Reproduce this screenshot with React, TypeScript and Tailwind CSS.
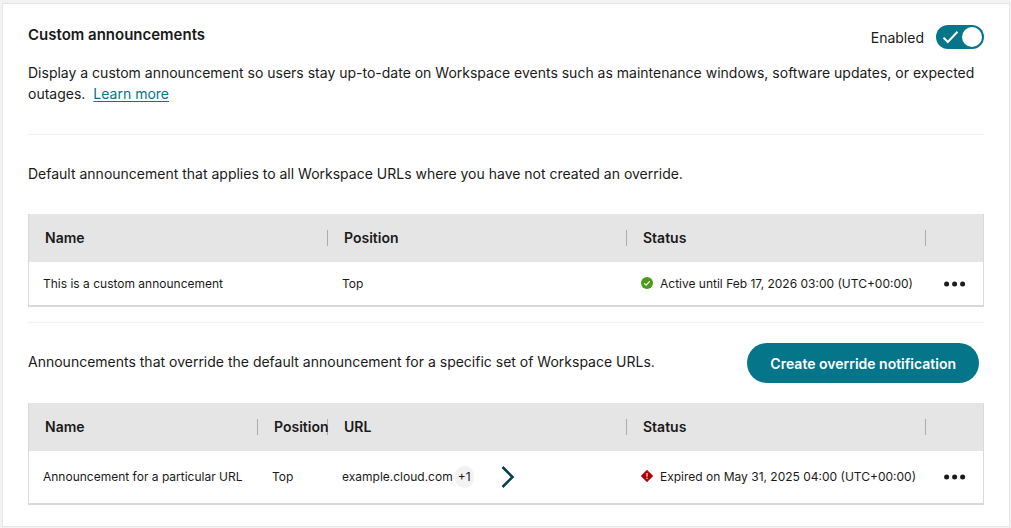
import { ReactNode } from "react"

function HeaderCell({ children, last }: { children?: ReactNode; last?: boolean }) {
    return (
        <th className="h-12 p-0 text-left leading-4 font-semibold">
            <div className={last ? "h-4" : "h-4 border-r border-[#adadad] pl-4 whitespace-nowrap"}>
                {children}
            </div>
        </th>
    )
}

function Cell({ children }: { children: ReactNode }) {
    return <td className="p-0 pl-[14px] text-xs leading-5 whitespace-nowrap">{children}</td>
}

function MoreButton() {
    return (
        <button type="button" aria-label="More actions" className="ml-[18px] block">
            <svg width="22" height="20" viewBox="0 0 22 20" fill="#1a1a1a">
                <circle cx="2.6" cy="10" r="2.5" />
                <circle cx="10.6" cy="10" r="2.5" />
                <circle cx="18.6" cy="10" r="2.5" />
            </svg>
        </button>
    )
}

function ActiveIcon() {
    return (
        <svg width="12" height="12" viewBox="0 0 12 12" className="mb-[2px] shrink-0">
            <circle cx="6" cy="6" r="6" fill="#4a9a17" />
            <path d="M3.2 6.3 5.1 8.2 8.9 4.1" fill="none" stroke="#fff" strokeWidth="1.2" />
        </svg>
    )
}

function ExpiredIcon() {
    return (
        <svg width="12" height="12" viewBox="0 0 12 12" className="mb-[2px] shrink-0">
            <path d="M6 0.7 11.3 6 6 11.3 0.7 6Z" fill="#ad0000" stroke="#ad0000" strokeWidth="1.2" strokeLinejoin="round" />
            <path d="M6 3v3.8M6 7.8v1.3" stroke="#f2c4c4" strokeWidth="1.4" />
        </svg>
    )
}

function Toggle() {
    return (
        <label className="flex items-center gap-3">
            Enabled
            <input type="checkbox" role="switch" defaultChecked className="sr-only" />
            <span className="flex h-6 w-12 items-center justify-between rounded-full bg-[#05758a] pr-[2px] pl-[6px]">
                <svg width="17" height="14" viewBox="0 0 17 14" fill="none" stroke="#fff" strokeWidth="2">
                    <path d="M1.5 7.6 5.8 12 15.5 1.7" />
                </svg>
                <span className="size-5 rounded-full bg-white" />
            </span>
        </label>
    )
}

function TableFrame({ children }: { children: ReactNode }) {
    return (
        <div className="border-x border-b-2 border-[#d9d9d9]">
            <table className="w-full table-fixed">{children}</table>
        </div>
    )
}

export default function App() {
    return (
        <div className="min-h-screen bg-[#f3f3f3] pt-[3px] pr-px pb-px pl-[2px] font-['Inter',sans-serif] text-sm leading-[21px] text-[#1a1a1a]">
            <main className="border border-[#e5e5e5] bg-white px-[25px] py-[21px]">
                <header className="flex h-6 items-start justify-between">
                    <h1 className="text-[15px] leading-5 font-semibold">Custom announcements</h1>
                    <Toggle />
                </header>
                <p className="mt-[13px]">
                    Display a custom announcement so users stay up-to-date on Workspace events such as maintenance windows,
                    software updates, or expected outages.
                    <a href="#" className="ml-2 text-[#05758a] underline underline-offset-2">Learn more</a>
                </p>

                <section className="mt-[30px] border-t border-[#f2f2f2] pt-7">
                    <p className="mb-[30px]">
                        Default announcement that applies to all Workspace URLs where you have not created an override.
                    </p>
                    <TableFrame>
                        <colgroup>
                            <col />
                            <col />
                            <col />
                            <col className="w-[57px]" />
                        </colgroup>
                        <thead className="bg-[#e5e5e5]">
                            <tr>
                                <HeaderCell>Name</HeaderCell>
                                <HeaderCell>Position</HeaderCell>
                                <HeaderCell>Status</HeaderCell>
                                <HeaderCell last />
                            </tr>
                        </thead>
                        <tbody>
                            <tr className="h-[43px]">
                                <Cell>This is a custom announcement</Cell>
                                <Cell>Top</Cell>
                                <Cell>
                                    <span className="flex items-center gap-[7px]">
                                        <ActiveIcon />
                                        Active until Feb 17, 2026 03:00 (UTC+00:00)
                                    </span>
                                </Cell>
                                <td className="p-0">
                                    <MoreButton />
                                </td>
                            </tr>
                        </tbody>
                    </TableFrame>
                </section>

                <section className="mt-[15px] border-t border-[#f2f2f2] pt-5">
                    <div className="mb-5 flex items-start justify-between pr-[5px]">
                        <p className="pt-2">
                            Announcements that override the default announcement for a specific set of Workspace URLs.
                        </p>
                        <button type="button" className="h-10 rounded-full bg-[#05758a] px-[23px] font-semibold whitespace-nowrap text-white">
                            Create override notification
                        </button>
                    </div>
                    <TableFrame>
                        <colgroup>
                            <col className="w-[229px]" />
                            <col className="w-[70px]" />
                            <col />
                            <col />
                            <col className="w-[57px]" />
                        </colgroup>
                        <thead className="bg-[#e5e5e5]">
                            <tr>
                                <HeaderCell>Name</HeaderCell>
                                <HeaderCell>Position</HeaderCell>
                                <HeaderCell>URL</HeaderCell>
                                <HeaderCell>Status</HeaderCell>
                                <HeaderCell last />
                            </tr>
                        </thead>
                        <tbody>
                            <tr className="h-[52px]">
                                <Cell>Announcement for a particular URL</Cell>
                                <Cell>Top</Cell>
                                <Cell>
                                    <div className="flex items-center">
                                        example.cloud.com
                                        <span className="ml-[2px] flex h-[22px] w-[19px] items-center justify-center rounded-full bg-[#f2f2f2]">+1</span>
                                        <button type="button" aria-label="Show all URLs" className="ml-[27px]">
                                            <svg width="14" height="22" viewBox="0 0 14 22" fill="none" stroke="#023f4f" strokeWidth="2.6">
                                                <path d="M1.5 1 11.5 11 1.5 21" />
                                            </svg>
                                        </button>
                                    </div>
                                </Cell>
                                <Cell>
                                    <span className="flex items-center gap-[7px]">
                                        <ExpiredIcon />
                                        Expired on May 31, 2025 04:00 (UTC+00:00)
                                    </span>
                                </Cell>
                                <td className="p-0">
                                    <MoreButton />
                                </td>
                            </tr>
                        </tbody>
                    </TableFrame>
                </section>
            </main>
        </div>
    )
}
